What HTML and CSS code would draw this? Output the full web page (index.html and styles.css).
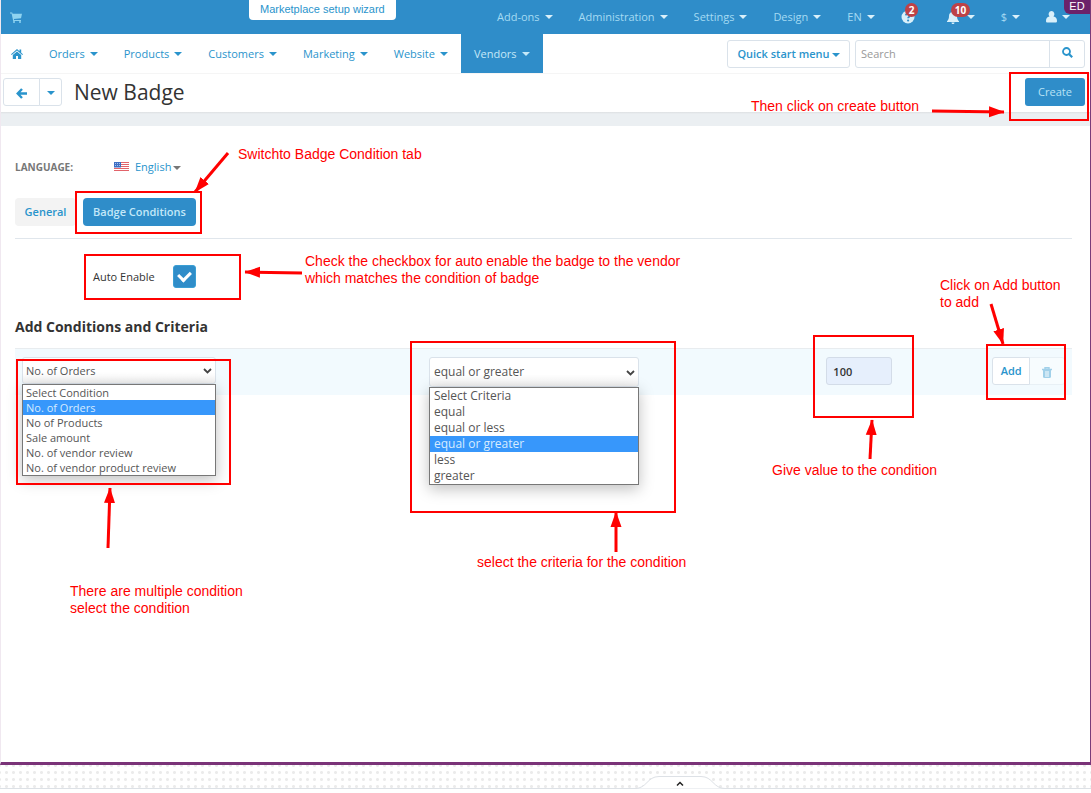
FILE: index.html
```html
<!DOCTYPE html>
<html lang="en">
<head>
    <meta charset="UTF-8">
    <meta name="viewport" content="width=device-width, initial-scale=1.0">
    <title>New Badge</title>
    <link rel="stylesheet" href="styles.css">
</head>
<body>
    <div class="admin">
        <header class="topbar">
            <a href="#" class="cart" aria-label="Storefront">
                <svg width="12" height="11" viewBox="0 0 12 11"><path d="M0 .5h2.2l.4 1.3H12l-1 4.4-7.1.9.2.8H11v1H3.200L1.600 1.500H0z" fill="currentColor"/><circle cx="4" cy="10" r="1" fill="currentColor"/><circle cx="10" cy="10" r="1" fill="currentColor"/></svg>
            </a>
            <a href="#" class="wizard">Marketplace setup wizard</a>
            <nav class="top-menu">
                <a href="#">Add-ons<i class="caret"></i></a>
                <a href="#">Administration<i class="caret"></i></a>
                <a href="#">Settings<i class="caret"></i></a>
                <a href="#">Design<i class="caret"></i></a>
                <a href="#">EN<i class="caret"></i></a>
                <a href="#" class="help" aria-label="Help">
                    <svg width="14" height="14" viewBox="0 0 14 14"><circle cx="7" cy="7" r="6.500" fill="#d9f0fa"/><path d="M4.800 5.300C5 3.300 9.200 3.200 9 5.500 8.900 6.800 7.200 6.700 7.100 8.200" fill="none" stroke="#2f8dc9" stroke-width="1.800"/><circle cx="7.100" cy="10.500" r="1.100" fill="#2f8dc9"/></svg>
                    <span class="badge">2</span>
                </a>
                <a href="#" class="bell" aria-label="Notifications">
                    <svg width="12" height="13" viewBox="0 0 12 13"><path d="M6 0c.6 0 1 .4 1 1 2 .5 3 2 3 4 0 2.500.6 4 2 5.200v.8H0v-.8C1.400 9 2 7.500 2 5c0-2 1-3.500 3-4 0-.6.4-1 1-1zM4.500 11.500h3c0 2-3 2-3 0z" fill="#d9f0fa"/></svg>
                    <i class="caret"></i>
                    <span class="badge">10</span>
                </a>
                <a href="#">$<i class="caret"></i></a>
                <a href="#" aria-label="Account">
                    <svg width="11" height="12" viewBox="0 0 11 12"><path d="M5.500 0a3 3.200 0 0 1 2 5.500C10 6 11 7.500 11 10c0 1-.6 1.500-1.500 1.500h-8C.6 11.500 0 11 0 10c0-2.500 1-4 3.500-4.500A3 3.200 0 0 1 5.500 0z" fill="#d9f0fa"/></svg>
                    <i class="caret"></i>
                </a>
            </nav>
            <span class="editor-tag">ED</span>
        </header>

        <div class="navbar">
            <nav class="main-menu">
                <a href="#" class="home" aria-label="Home">
                    <svg width="12" height="10" viewBox="0 0 12 10"><path d="M6 0l2.500 2.200V.6h1.700v3.100L12 5.300l-.7.8L6 1.500.7 6.100 0 5.300z" fill="currentColor"/><path d="M6 2.400l4.200 3.600v4H7V7H5v3H1.800V6z" fill="currentColor"/></svg>
                </a>
                <a href="#">Orders<i class="caret"></i></a>
                <a href="#">Products<i class="caret"></i></a>
                <a href="#">Customers<i class="caret"></i></a>
                <a href="#">Marketing<i class="caret"></i></a>
                <a href="#">Website<i class="caret"></i></a>
                <a href="#" class="active">Vendors<i class="caret"></i></a>
            </nav>
            <button type="button" class="btn quick">Quick start menu<i class="caret"></i></button>
            <form class="search">
                <input type="text" placeholder="Search" aria-label="Search">
                <button type="button" aria-label="Find">
                    <svg width="11" height="11" viewBox="0 0 11 11"><circle cx="4.500" cy="4.500" r="3.500" fill="none" stroke="currentColor" stroke-width="1.800"/><path d="M7 7l3.200 3.200" stroke="currentColor" stroke-width="2.200"/></svg>
                </button>
            </form>
        </div>

        <div class="titlebar">
            <div class="btn-group">
                <button type="button" class="btn back" aria-label="Back">
                    <svg width="11" height="11" viewBox="0 0 11 11"><path d="M6 1L1.700 5.500 6 10M2 5.500h9" fill="none" stroke="currentColor" stroke-width="2.400"/></svg>
                </button>
                <button type="button" class="btn more" aria-label="More"><i class="caret"></i></button>
            </div>
            <h1>New Badge</h1>
            <button type="button" class="btn-primary create">Create</button>
        </div>

        <main class="content">
            <div class="language">
                <span class="language-label">LANGUAGE:</span>
                <svg width="15" height="10" viewBox="0 0 15 10"><path fill="#fff" d="M0 0h15v10H0z"/><path d="M0 .5h15M0 2.500h15M0 4.500h15M0 6.500h15M0 8.500h15" stroke="#e2636a"/><path fill="#3d6fc4" d="M0 0h7v5.500H0z"/><path d="M1 1.500h5M1 3.500h5" stroke="#a9c2ec" stroke-dasharray="1 1"/></svg>
                <a href="#">English<i class="caret"></i></a>
            </div>

            <div class="tabs">
                <button type="button" class="tab">General</button>
                <button type="button" class="tab tab-active">Badge Conditions</button>
            </div>

            <div class="auto-enable">
                <label for="autoEnable">Auto Enable</label>
                <input type="checkbox" id="autoEnable" checked>
            </div>

            <h2>Add Conditions and Criteria</h2>

            <table class="conditions">
                <tbody>
                    <tr>
                        <td class="col-condition">
                            <div class="picker">
                                <select aria-label="Condition">
                                    <option>No. of Orders</option>
                                </select>
                                <svg class="chevron" width="9" height="6" viewBox="0 0 9 6"><path d="M1 1l3.500 3.500L8 1" fill="none" stroke="#444" stroke-width="1.800"/></svg>
                                <ul class="options" role="listbox">
                                    <li>Select Condition</li>
                                    <li class="selected">No. of Orders</li>
                                    <li>No of Products</li>
                                    <li>Sale amount</li>
                                    <li>No. of vendor review</li>
                                    <li>No. of vendor product review</li>
                                </ul>
                            </div>
                        </td>
                        <td class="col-criteria">
                            <div class="picker picker-large">
                                <select aria-label="Criteria">
                                    <option>equal or greater</option>
                                </select>
                                <svg class="chevron" width="9" height="6" viewBox="0 0 9 6"><path d="M1 1l3.500 3.500L8 1" fill="none" stroke="#444" stroke-width="1.800"/></svg>
                                <ul class="options" role="listbox">
                                    <li>Select Criteria</li>
                                    <li>equal</li>
                                    <li>equal or less</li>
                                    <li class="selected">equal or greater</li>
                                    <li>less</li>
                                    <li>greater</li>
                                </ul>
                            </div>
                        </td>
                        <td class="col-value"><input type="text" class="value" value="100" aria-label="Value"></td>
                        <td class="col-actions">
                            <div class="btn-group">
                                <button type="button" class="btn add">Add</button>
                                <button type="button" class="btn remove" aria-label="Delete" disabled>
                                    <svg width="10" height="11" viewBox="0 0 10 11"><path d="M0 2.500h10M3 2V.7h4V2" fill="none" stroke="currentColor" stroke-width="1.400"/><path d="M1 3h8v6.500q0 1.500-1.500 1.500h-5Q1 11 1 9.500z" fill="currentColor"/><path d="M3 5h4M3 7h4M3 9h4" stroke="#fff"/></svg>
                                </button>
                            </div>
                        </td>
                    </tr>
                </tbody>
            </table>
        </main>
    </div>

    <footer class="canvas-footer">
        <svg class="handle" width="90" height="13" viewBox="0 0 90 13"><path d="M0 12.500C12 12.500 12 .5 24 .5h42C78 .5 78 12.500 90 12.500" fill="#fff" stroke="#dde1e6"/><path d="M42 9.500l3-3 3 3" fill="none" stroke="#222" stroke-width="1.500"/></svg>
    </footer>

    <!-- Guide notes drawn over the page -->
    <svg class="marks" width="1091" height="793" viewBox="0 0 1091 793">
        <defs>
            <marker id="head" markerUnits="userSpaceOnUse" markerWidth="16" markerHeight="12" refX="15" refY="6" orient="auto"><path d="M0 .5L15.500 6 0 11.500z" fill="#f00"/></marker>
        </defs>
        <g class="mark-boxes">
            <rect x="1010" y="73" width="78" height="47"/>
            <rect x="76" y="192" width="125" height="41"/>
            <rect x="85" y="255" width="155" height="44"/>
            <rect x="17" y="360" width="213" height="124"/>
            <rect x="411" y="342" width="264" height="170"/>
            <rect x="814" y="336" width="99" height="81"/>
            <rect x="987" y="345" width="78" height="54"/>
        </g>
        <g class="mark-arrows">
            <path d="M932 111L1004 112" marker-end="url(#head)"/>
            <path d="M228 153L195 192" marker-end="url(#head)"/>
            <path d="M302 273L245 272" marker-end="url(#head)"/>
            <path d="M108 548L110 488" marker-end="url(#head)"/>
            <path d="M616 552L616 512" marker-end="url(#head)"/>
            <path d="M870 459L872 420" marker-end="url(#head)"/>
            <path d="M991 304L1003 344" marker-end="url(#head)"/>
        </g>
    </svg>
    <p class="note note-create">Then click on create button</p>
    <p class="note note-tab">Switchto Badge Condition tab</p>
    <p class="note note-auto">Check the checkbox for auto enable the badge to the vendor<br>which matches the condition of badge</p>
    <p class="note note-add">Click on Add button<br>to add</p>
    <p class="note note-value">Give value to the condition</p>
    <p class="note note-criteria">select the criteria for the condition</p>
    <p class="note note-condition">There are multiple condition<br>select the condition</p>
</body>
</html>
```
FILE: styles.css
```css
* {
    box-sizing: border-box;
}
body {
    margin: 0;
    min-height: 100vh;
    display: flex;
    flex-direction: column;
    position: relative;
    font-family: "Open Sans", "Noto Sans", sans-serif;
    font-size: 11px;
    line-height: 16px;
    color: #333;
    background: #fff;
}
a {
    color: #2a94cc;
    text-decoration: none;
}
button, input, select {
    font: inherit;
}
svg {
    flex: none;
}
.admin {
    flex: 1;
    border-left: 1px solid #f0e8f0;
    border-right: 1px solid #7a3b7a;
    border-bottom: 3px solid #7a3378;
}
.caret {
    display: inline-block;
    flex: none;
    margin-left: 5px;
    border: 4px solid transparent;
    border-top-color: currentColor;
    border-bottom: 0;
    vertical-align: middle;
}

/* Top bar */
.topbar {
    position: relative;
    display: flex;
    height: 34px;
    background: #2f8dc9;
}
.cart {
    display: flex;
    align-items: center;
    width: 248px;
    padding-left: 9px;
    color: #8fd3f0;
}
.wizard {
    height: 20px;
    padding: 0 11px;
    border-radius: 0 0 4px 4px;
    background: #fff;
    font-family: "Liberation Sans", Arial, sans-serif;
    line-height: 18px;
    white-space: nowrap;
}
.top-menu {
    display: flex;
    margin-left: auto;
    padding-right: 7px;
    font-weight: 500;
}
.top-menu a {
    position: relative;
    display: flex;
    align-items: center;
    padding: 0 13px;
    color: #a5dbf3;
}
.top-menu .caret {
    color: #d9f0fa;
}
.top-menu .help {
    padding-right: 19px;
}
.top-menu .bell .caret {
    margin-left: 8px;
}
.top-menu .badge {
    position: absolute;
    top: 3px;
    left: 17px;
    padding: 0 4px;
    border-radius: 8px;
    background: #bd4247;
    color: #fff;
    font-size: 10px;
    font-weight: bold;
    line-height: 14px;
}
.editor-tag {
    position: absolute;
    top: 0;
    right: 0;
    width: 26px;
    height: 14px;
    border-radius: 0 0 0 6px;
    background: #6c226a;
    color: #fff;
    font-family: "Liberation Sans", Arial, sans-serif;
    font-size: 11px;
    line-height: 13px;
    text-align: center;
}

/* Main menu */
.navbar {
    display: flex;
    align-items: center;
    height: 40px;
    padding-right: 5px;
    border-bottom: 1px solid #f5f5f5;
}
.main-menu {
    display: flex;
    align-self: stretch;
    flex: 1;
    font-weight: 500;
}
.main-menu a {
    display: flex;
    align-items: center;
    padding: 0 13px;
}
.main-menu .home {
    padding-left: 10px;
}
.main-menu .active {
    background: #2f8dc9;
    color: #c4e8f8;
}
.btn {
    height: 28px;
    padding: 0 10px;
    border: 1px solid #dae2ea;
    border-radius: 3px;
    background: #fff;
    color: #2a94cc;
    font-weight: 600;
}
.quick {
    width: 123px;
    margin-right: 5px;
    padding: 0;
    white-space: nowrap;
}
.quick .caret {
    margin-left: 2px;
}
.search {
    display: flex;
    width: 230px;
    height: 28px;
    border: 1px solid #dae2ea;
    border-radius: 3px;
}
.search input {
    flex: 1;
    min-width: 0;
    padding: 0 5px;
    border: 0;
    background: none;
}
.search input::placeholder {
    color: #999;
}
.search button {
    width: 35px;
    border: 0;
    border-left: 1px solid #dae2ea;
    background: none;
    color: #2a94cc;
}

/* Page title */
.titlebar {
    display: flex;
    align-items: center;
    height: 52px;
    padding: 0 5px 4px 2px;
    border-bottom: 12px solid #ebeff2;
    background: linear-gradient(#fff 38px, #dde0e2 38px, #ebeff2);
}
.btn-group {
    display: flex;
}
.btn-group .btn:first-child {
    border-radius: 3px 0 0 3px;
}
.btn-group .btn:last-child {
    margin-left: -1px;
    border-radius: 0 3px 3px 0;
}
.back {
    width: 37px;
}
.back svg {
    vertical-align: middle;
}
.more {
    width: 23px;
    padding: 0;
}
.more .caret {
    margin: 0;
}
h1 {
    margin: 0 0 0 12px;
    font-size: 21px;
    font-weight: normal;
    line-height: 28px;
}
.btn-primary {
    height: 28px;
    border: 0;
    border-radius: 3px;
    background: #2f8dc9;
    color: #b8e2f5;
}
.create {
    width: 60px;
    margin-left: auto;
    padding: 0;
}

/* Badge form */
.content {
    padding: 32px 18px 0 14px;
}
.language {
    display: flex;
    align-items: center;
    height: 18px;
}
.language-label {
    width: 99px;
    color: #777;
    font-size: 10px;
    font-weight: bold;
}
.language a {
    margin-left: 6px;
    font-weight: 500;
}
.language .caret {
    margin-left: 2px;
    color: #777;
}
.tabs {
    display: flex;
    gap: 7px;
    margin-top: 22px;
    padding-bottom: 12px;
    border-bottom: 1px solid #e0e6ec;
}
.tab {
    width: 61px;
    height: 28px;
    padding: 0;
    border: 0;
    border-radius: 4px;
    background: #f3f3f3;
    color: #2a94cc;
    font-weight: 600;
}
.tab-active {
    width: 113px;
    background: #2f8dc9;
    color: #c4e8f8;
}
.auto-enable {
    display: flex;
    align-items: center;
    margin-top: 26px;
    padding-left: 78px;
}
.auto-enable label {
    width: 80px;
    font-weight: 500;
}
.auto-enable input {
    appearance: none;
    width: 23px;
    height: 23px;
    margin: 0;
    border: 1px solid #3b9fd4;
    border-radius: 3px;
    background: #2f8dc9;
    display: grid;
    place-items: center;
}
.auto-enable input::before {
    content: "";
    width: 6px;
    height: 9px;
    margin-bottom: 3px;
    border: solid #fff;
    border-width: 0 3px 3px 0;
    transform: rotate(45deg);
}
h2 {
    margin: 29px 0 11px;
    font-size: 14px;
    line-height: 20px;
}

.conditions {
    width: 100%;
    border-collapse: collapse;
    table-layout: fixed;
    border-top: 1px solid #e8ecef;
    background: #f2fafe;
}
.conditions td {
    height: 46px;
    padding: 8px 7px;
    vertical-align: top;
}
.conditions .col-condition {
    width: 38.5%;
}
.conditions .col-criteria {
    width: 37.6%;
}
.conditions .col-value {
    width: 15.7%;
}
.picker {
    position: relative;
    width: 194px;
    color: #555;
}
.picker select {
    appearance: none;
    display: block;
    width: 100%;
    height: 27px;
    padding: 0 3px;
    border: 1px solid #dae2ea;
    border-radius: 3px;
    background: linear-gradient(#fff 60%, #f2f2f2);
    color: #555;
}
.chevron {
    position: absolute;
    top: 11px;
    right: 4px;
}
.options {
    position: absolute;
    top: 27px;
    left: 0;
    width: 100%;
    margin: 0;
    padding: 0;
    border: 1px solid #777;
    background: #fff;
    box-shadow: 0 4px 14px rgba(0, 0, 0, 0.25);
    list-style: none;
    line-height: 15px;
}
.options li {
    padding: 0 3px;
}
.options .selected {
    background: #3797fb;
    color: #d6ebff;
}
.picker-large {
    width: 210px;
    font-size: 12px;
}
.picker-large select {
    height: 30px;
    padding: 0 4px;
}
.picker-large .chevron {
    top: 13px;
}
.picker-large .options {
    top: 30px;
    line-height: 16px;
}
.picker-large li {
    padding: 0 4px;
}
.value {
    width: 66px;
    height: 28px;
    padding: 0 6px;
    border: 1px solid #d3dce8;
    border-radius: 3px;
    background: #e6effc;
    color: #333;
    font-weight: 600;
}
.add {
    width: 38px;
    padding: 0;
}
.remove {
    width: 36px;
    padding: 0;
    opacity: 0.4;
}
.remove svg {
    vertical-align: middle;
}

/* Dotted strip below the page */
.canvas-footer {
    position: relative;
    height: 28px;
    background: radial-gradient(#ebebeb 1px, transparent 2px) 3px 4px / 7px 7px;
    border-bottom: 4px solid #fff;
    box-shadow: inset 0 -1px #dde1e6;
}
.handle {
    position: absolute;
    bottom: 0;
    left: 635px;
}

/* Guide notes */
.marks {
    position: absolute;
    top: 0;
    left: 0;
    pointer-events: none;
}
.mark-boxes, .mark-arrows {
    fill: none;
    stroke: #f00;
    stroke-width: 2;
}
.mark-arrows {
    stroke-width: 3;
}
.note {
    position: absolute;
    margin: 0;
    color: #f00;
    font-family: "Liberation Sans", Arial, sans-serif;
    font-size: 14px;
    line-height: 17px;
    white-space: nowrap;
}
.note-create {
    top: 98px;
    left: 751px;
}
.note-tab {
    top: 146px;
    left: 238px;
}
.note-auto {
    top: 253px;
    left: 305px;
}
.note-add {
    top: 277px;
    left: 940px;
}
.note-value {
    top: 462px;
    left: 772px;
}
.note-criteria {
    top: 554px;
    left: 477px;
}
.note-condition {
    top: 583px;
    left: 70px;
}
```
